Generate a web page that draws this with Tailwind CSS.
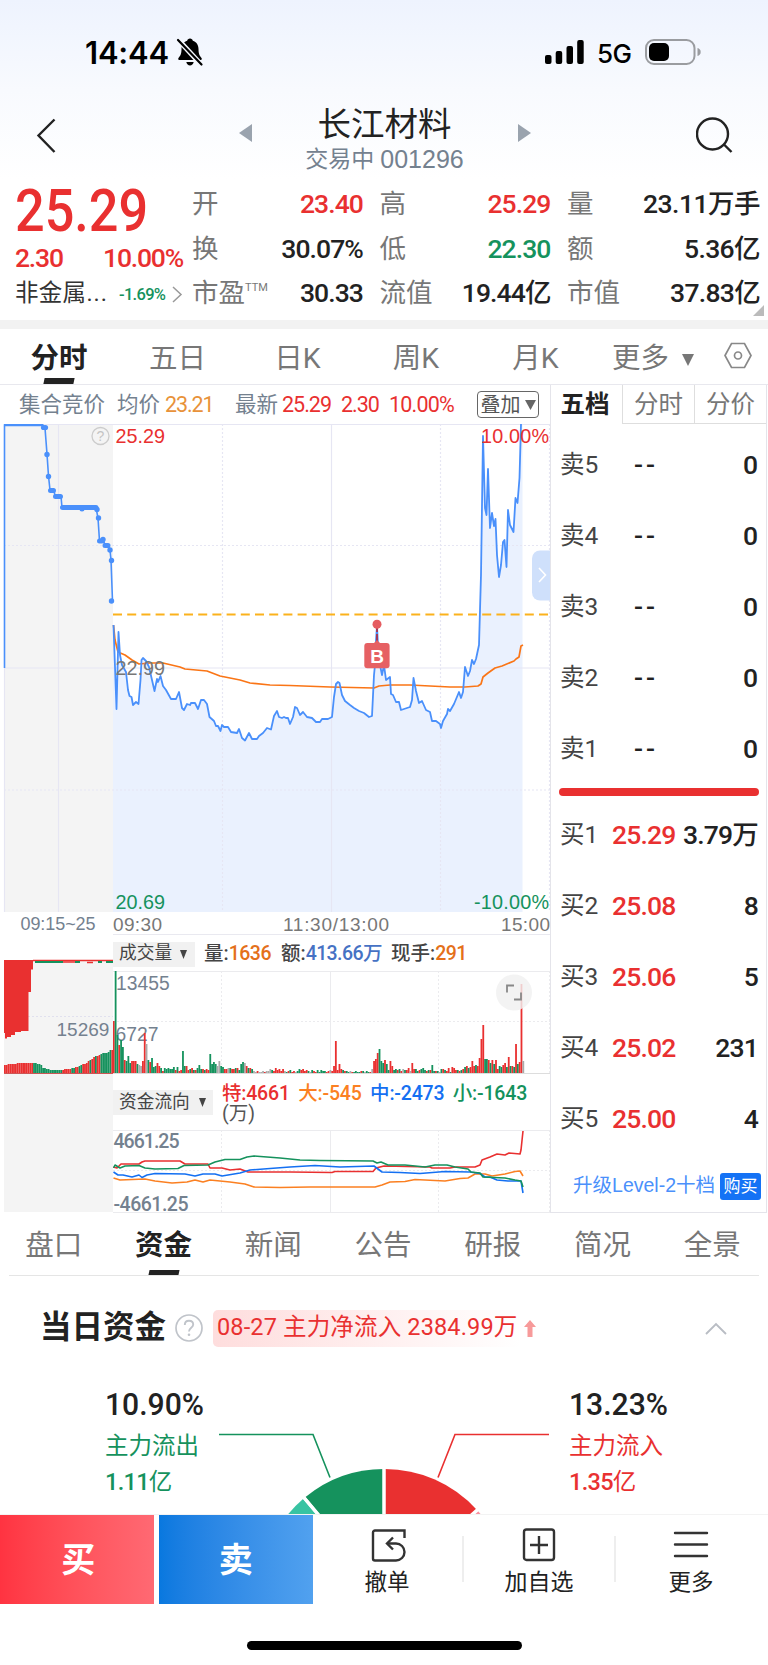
<!DOCTYPE html>
<html lang="zh-CN">

<head>
    <meta charset="UTF-8">
    <meta name="viewport" content="width=device-width, initial-scale=1.0">
    <title>长江材料 001296</title>
    <script src="https://cdn.jsdelivr.net/npm/@tailwindcss/browser@4"></script>
</head>

<body class="bg-white font-['Roboto','Noto_Sans_CJK_SC',sans-serif] text-[#222]">
    <div class="w-[768px] h-[1665px] overflow-hidden flex flex-col leading-none whitespace-nowrap">

        <!-- Statusrad + titel -->
        <header class="h-[180px] shrink-0 bg-linear-to-b from-[#eef3fe] via-[#f8fafe] to-white">
            <div class="h-[104px] pt-[37px] pl-[85px] pr-[66px] flex justify-between text-black">
                <div class="h-[30px] flex items-center gap-[7px]">
                    <span class="font-['Inter'] font-semibold text-[31px] tracking-[-0.2px] pt-px">14:44</span>
                    <svg class="w-[28px] h-[30px]" viewBox="0 0 28 30">
                        <path d="M14 1.5c1.5 0 2.6 1 2.8 2.2 3.700 1.200 5.700 4.300 5.700 8.300 0 5.500 1.500 7.200 3 9 .7.900.3 2-.8 2H3.300c-1.100 0-1.500-1.100-.8-2 1.500-1.800 3-3.500 3-9 0-4 2-7.100 5.700-8.300C11.400 2.500 12.500 1.500 14 1.500zM10.300 25h7.400c-.5 2.200-1.900 3.400-3.700 3.400s-3.200-1.200-3.700-3.400z" />
                        <path d="M2 2.500 25.500 28" stroke="#f5f8fe" stroke-width="5" />
                        <path d="M2 3 25.500 27.500" stroke="#000" stroke-width="2.200" stroke-linecap="round" />
                    </svg>
                </div>
                <div class="h-[30px] flex items-center">
                    <svg class="w-[39px] h-[26px]" viewBox="0 0 39 26">
                        <rect x="0" y="16" width="6.500" height="9" rx="2" />
                        <rect x="10.700" y="12" width="6.500" height="13" rx="2" />
                        <rect x="21.500" y="7" width="6.500" height="18" rx="2" />
                        <rect x="32.200" y="1" width="6.500" height="24" rx="2" />
                    </svg>
                    <span class="ml-[13px] w-[48px] font-['Inter'] font-medium text-[26px] tracking-[-0.5px] pt-[4px]">5G</span>
                    <svg class="w-[57px] h-[28px]" viewBox="0 0 57 28">
                        <rect x="1" y="2" width="48.500" height="24" rx="8" fill="none" stroke="#9a9ca0" stroke-width="2" />
                        <rect x="4" y="5" width="20" height="18" rx="5" />
                        <path d="M52.500 10v8c2-.6 3.200-2 3.200-4s-1.200-3.400-3.200-4z" fill="#9a9ca0" />
                    </svg>
                </div>
            </div>
            <div class="pl-[36px] pr-[34px] flex justify-between items-start">
                <svg class="w-[22px] h-[38px] mt-[13px]" viewBox="0 0 22 38">
                    <path d="M18.500 2.500 2.500 18.500 18.500 35" fill="none" stroke="#222" stroke-width="2.400" />
                </svg>
                <div class="ml-[15px] w-[292px] flex justify-between">
                    <svg class="w-[14px] h-[18px] mt-[20px]" viewBox="0 0 14 18"><path d="M13 0v18L0 9z" fill="#9aa3ae" /></svg>
                    <div class="flex flex-col items-center">
                        <span class="text-[33.500px] h-[42px] flex items-center">长江材料</span>
                        <span class="text-[23px] h-[26px] flex items-center gap-[6px] text-[#74818f]">交易中<span class="font-['Liberation_Sans'] text-[25px]">001296</span></span>
                    </div>
                    <svg class="w-[14px] h-[18px] mt-[20px]" viewBox="0 0 14 18"><path d="M1 0v18l13-9z" fill="#9aa3ae" /></svg>
                </div>
                <svg class="w-[38px] h-[38px] mt-[13px]" viewBox="0 0 38 38" fill="none" stroke="#222" stroke-width="2.400">
                    <circle cx="16.500" cy="17" r="15.500" />
                    <path d="m28 27.500 7.500 7.500" />
                </svg>
            </div>
        </header>

        <!-- Kursdata -->
        <section class="h-[140px] shrink-0 flex relative">
            <div class="w-[192px] pl-[15px] text-[#e93030]">
                <div class="h-[58px] pt-[4px] flex items-center text-[59px] leading-[54px] font-medium"><span class="origin-left scale-x-[0.885]">25.29</span></div>
                <div class="h-[36px] w-[168px] flex items-center justify-between text-[26.500px] leading-[27px] font-medium tracking-[-1.200px] pt-[3px]">
                    <span>2.30</span><span>10.00%</span>
                </div>
                <div class="h-[40px] flex items-center text-[23.500px] text-[#333]">
                    <span class="w-[104px] tracking-[0.300px]">非金属<span class="tracking-[1px]">...</span></span>
                    <span class="w-[52px] pt-[2px] text-[16.500px] font-medium tracking-[-0.700px] text-[#15925d]">-1.69%</span>
                    <svg class="w-[12px] h-[17px]" viewBox="0 0 12 17"><path d="m2 1 8 7.500-8 7.500" fill="none" stroke="#999" stroke-width="1.500" /></svg>
                </div>
            </div>
            <div class="w-[568px] h-[136px] pt-[2px] grid grid-cols-[171px_171px_193px] gap-x-[16.500px] grid-rows-3 text-[26.500px] font-medium tracking-[-0.900px] [&>div]:flex [&>div]:items-center [&>div]:justify-between [&_b]:font-normal [&_b]:text-[#777] [&_b]:tracking-normal">
                <div><b>开</b><span class="text-[#e93030]">23.40</span></div>
                <div><b>高</b><span class="text-[#e93030]">25.29</span></div>
                <div><b>量</b><span class="tracking-[-0.500px]">23.11万手</span></div>
                <div><b>换</b><span>30.07%</span></div>
                <div><b>低</b><span class="text-[#15925d]">22.30</span></div>
                <div><b>额</b><span class="tracking-[-0.600px]">5.36亿</span></div>
                <div><b class="flex items-start">市盈<span class="text-[11px] pt-[2px]">TTM</span></b><span>30.33</span></div>
                <div><b>流值</b><span>19.44亿</span></div>
                <div><b>市值</b><span class="tracking-[-0.700px]">37.83亿</span></div>
            </div>
            <svg class="absolute right-[4px] bottom-[4px] w-[11px] h-[11px]" viewBox="0 0 11 11"><path d="M11 0v11H0z" fill="#bbb" /></svg>
        </section>

        <div class="h-[9px] shrink-0 bg-[#f2f2f2]"></div>

        <!-- Periodflikar -->
        <nav class="h-[56px] shrink-0 border-b border-[#e8e8ee] flex items-stretch text-[28.500px] text-[#777]">
            <div class="w-[118px] flex flex-col items-center justify-between font-bold text-[#222]">
                <span class="pt-[15.500px]">分时</span>
                <span class="w-[30px] h-[6px] bg-[#222] -skew-x-12"></span>
            </div>
            <span class="w-[119px] pt-[15.500px] text-center">五日</span>
            <span class="w-[121px] pt-[15.500px] text-center">日K</span>
            <span class="w-[116px] pt-[15.500px] text-center">周K</span>
            <span class="w-[123px] pt-[15.500px] text-center">月K</span>
            <span class="w-[70px] pl-[15px] pt-[15.500px]">更多</span>
            <svg class="ml-[15px] mt-[25px] w-[12px] h-[13px]" viewBox="0 0 12 13"><path d="M0 0h12L6 12z" fill="#777" /></svg>
            <svg class="ml-[30px] mt-[13px] w-[28px] h-[27px]" viewBox="0 0 28 27" fill="none" stroke="#888" stroke-width="1.700">
                <path d="M7.500 1.500h13l6.500 12-6.500 12h-13L1 13.500z" />
                <circle cx="14" cy="13.500" r="3.500" />
            </svg>
        </nav>

        <main class="h-[828px] shrink-0 flex">
            <div class="w-[550px] flex flex-col">
                <div class="h-[39px] flex items-center pl-[19px] text-[21.500px] text-[#74818f]">
                    <span class="w-[98px]">集合竞价</span>
                    <span class="w-[48px]">均价</span>
                    <span class="w-[70px] tracking-[-1.100px] text-[#e8923a]">23.21</span>
                    <span class="w-[47px]">最新</span>
                    <span class="w-[59px] tracking-[-1px] text-[#e93030]">25.29</span>
                    <span class="w-[48px] tracking-[-1px] text-[#e93030]">2.30</span>
                    <span class="w-[88px] tracking-[-0.800px] text-[#e93030]">10.00%</span>
                    <span class="w-[62px] h-[27px] border-[1.500px] border-[#666] rounded-[4px] flex items-center justify-center gap-[4px] text-[20px] text-[#555]">叠加<svg class="w-[11px] h-[10px]" viewBox="0 0 11 10"><path d="M0 0h11L5.500 10z" fill="#666" /></svg></span>
                </div>

                <!-- Prisdiagram -->
                <svg class="w-[550px] h-[510px] shrink-0" viewBox="0 424 550 510" font-family="Liberation Sans">
                    <rect x="4" y="424" width="109" height="488" fill="#f4f4f4" />
                    <path d="M113 625 L113.500 625 L116.500 709 L118.500 632 L120 655 L122 665 L126 672 L128 690 L129.500 696 L131.500 697 L133 705 L136 702 L138.500 704 L140.500 680 L141.500 660 L143 658 L146 661 L149 667 L152 680 L154.500 691 L157 679 L158 682 L160.500 676 L163 686 L166 690 L171 699 L176 699 L179 692 L182 708 L184 710 L187 704 L190 705 L191 703 L195 703 L198 709 L201 700 L204 700 L207 704 L209.500 717 L214 721 L216 726 L218 726 L220.500 731 L222 725 L224 727 L228 727 L231 732 L237 733 L239 729 L242 738 L245 740.500 L249 733 L252 739 L257 739 L259 736 L263 733 L267 728 L271 729.500 L274 716 L277 711 L279 717 L282 718 L284 717 L286 718 L288 718 L290 724 L293 717 L295 707 L297 708 L300 715 L303 712 L307 717 L312 718 L316 722 L320 722 L322 719 L328 719 L332 717 L334 697 L336 684 L338 682 L339.500 683 L342 695 L345 701 L350 705 L354 708 L359 711 L364 713 L369 717 L372 716 L374 675 L375 665 L376 640 L377 626 L378 645 L380 665 L382 675 L384 665 L386 680 L390 677 L391 694 L393 695 L396 702 L399 702 L401 710 L410 707 L412 700 L413.500 678 L416 691 L419 703 L422 701 L426 710 L430 712 L432 721 L436 721 L440 724 L441 728 L443 721 L447 714 L448 709 L450 711 L454 704 L459 692 L461 698 L463 692 L465 667 L468 676 L470 671 L472 660 L474 664 L476 659 L479 645 L481 575 L483 436 L485 508 L486.500 515 L488 469 L490 528 L492 513 L494 526 L495.500 519 L497 555 L499 577 L501 565 L503 542 L504.500 540 L506.500 567 L508 510 L510 525 L513.500 532 L515.500 498 L517.500 503 L519.500 478 L521 424 L522.500 424 L522.500 912 L113 912Z" fill="#eaf1fe" />
                    <g stroke="#e6e6f3" stroke-width="1.200" fill="none">
                        <path d="M4 424.500H550M4 668H550M4.500 668V912M58.500 424V912M331.500 424V912" />
                        <path d="M4 545.500H550M4 790H550M222.500 424V912M440.500 424V912M549.500 424V912" stroke-dasharray="2 2" />
                    </g>
                    <path d="M113 614.500H550" stroke="#fbb21c" stroke-width="1.800" stroke-dasharray="9 5.200" />
                    <path d="M113.500 625 L115 640 L118 652 L125 655 L132 660 L139 664 L150 663 L163 663 L180 667 L185 669 L207 671 L220 676 L240 680 L250 683 L270 685 L290 685.500 L330 687 L374 688 L379 686 L390 685 L410 685 L450 687 L465 687 L478 686 L481 684 L483 677 L488 673 L495 668 L502 666 L514 661 L516 659 L519 657 L521 646 L523 645" fill="none" stroke="#fa7516" stroke-width="1.700" stroke-linejoin="round" />
                    <path d="M113.500 625 L116.500 709 L118.500 632 L120 655 L122 665 L126 672 L128 690 L129.500 696 L131.500 697 L133 705 L136 702 L138.500 704 L140.500 680 L141.500 660 L143 658 L146 661 L149 667 L152 680 L154.500 691 L157 679 L158 682 L160.500 676 L163 686 L166 690 L171 699 L176 699 L179 692 L182 708 L184 710 L187 704 L190 705 L191 703 L195 703 L198 709 L201 700 L204 700 L207 704 L209.500 717 L214 721 L216 726 L218 726 L220.500 731 L222 725 L224 727 L228 727 L231 732 L237 733 L239 729 L242 738 L245 740.500 L249 733 L252 739 L257 739 L259 736 L263 733 L267 728 L271 729.500 L274 716 L277 711 L279 717 L282 718 L284 717 L286 718 L288 718 L290 724 L293 717 L295 707 L297 708 L300 715 L303 712 L307 717 L312 718 L316 722 L320 722 L322 719 L328 719 L332 717 L334 697 L336 684 L338 682 L339.500 683 L342 695 L345 701 L350 705 L354 708 L359 711 L364 713 L369 717 L372 716 L374 675 L375 665 L376 640 L377 626 L378 645 L380 665 L382 675 L384 665 L386 680 L390 677 L391 694 L393 695 L396 702 L399 702 L401 710 L410 707 L412 700 L413.500 678 L416 691 L419 703 L422 701 L426 710 L430 712 L432 721 L436 721 L440 724 L441 728 L443 721 L447 714 L448 709 L450 711 L454 704 L459 692 L461 698 L463 692 L465 667 L468 676 L470 671 L472 660 L474 664 L476 659 L479 645 L481 575 L483 436 L485 508 L486.500 515 L488 469 L490 528 L492 513 L494 526 L495.500 519 L497 555 L499 577 L501 565 L503 542 L504.500 540 L506.500 567 L508 510 L510 525 L513.500 532 L515.500 498 L517.500 503 L519.500 478 L521 424" fill="none" stroke="#4a90fb" stroke-width="1.800" stroke-linejoin="round" />
                    <!-- Öppningsauktion -->
                    <g fill="none" stroke="#4a90fb">
                        <path d="M4.500 668V425H43L45 428 47 454 48.500 476 50 490H54L55 496.500H61L62 507.500H96L98 518 99.500 541 103 539 105 545H108L110 550 111 560 112.500 601" stroke-width="1.600" />
                        <path d="M4 425H43" stroke-width="2.600" />
                        <path d="M50.500 490.500H53.500M55.500 496.500H60.500M62.500 507.500H96M82 508V509M99.500 541H102M105 545.500H108" stroke-width="5" stroke-linecap="round" />
                    </g>
                    <g fill="#4a90fb">
                        <circle cx="43.500" cy="427.500" r="2.600" /><circle cx="45.500" cy="427.500" r="2.600" /><circle cx="47" cy="454.500" r="2.700" /><circle cx="48.500" cy="476.500" r="2.700" />
                        <circle cx="97" cy="509.500" r="2.700" /><circle cx="98.500" cy="518" r="2.700" /><circle cx="103" cy="539.500" r="2.700" /><circle cx="110" cy="550" r="2.700" />
                        <circle cx="111.500" cy="560.500" r="2.700" /><circle cx="111.500" cy="601" r="2.700" />
                    </g>
                    <circle cx="100.500" cy="436" r="8.500" fill="none" stroke="#ccc" stroke-width="1.300" />
                    <text x="100.500" y="441" font-size="14" fill="#c4c4c4" text-anchor="middle">?</text>
                    <g font-size="19.800">
                        <text x="115.500" y="442.500" fill="#e93030">25.29</text>
                        <text x="549" y="442.500" fill="#e93030" text-anchor="end" textLength="68">10.00%</text>
                        <text x="115.500" y="675" fill="#777">22.99</text>
                        <text x="115.500" y="908.500" fill="#15925d">20.69</text>
                        <text x="549" y="908.500" fill="#15925d" text-anchor="end" textLength="75">-10.00%</text>
                        <text x="113" y="931" font-size="19" textLength="49" fill="#777">09:30</text>
                        <text x="336" y="931" font-size="19" textLength="106" fill="#777" text-anchor="middle">11:30/13:00</text>
                        <text x="550" y="931" font-size="19" textLength="49" fill="#777" text-anchor="end">15:00</text>
                        <text x="20.500" y="930" font-size="18" textLength="75" fill="#74818f">09:15~25</text>
                    </g>
                    <!-- Köpmarkering -->
                    <path d="M377 624V643" stroke="#a03a5c" stroke-width="2" stroke-dasharray="8 2" />
                    <circle cx="377" cy="624.300" r="4.500" fill="#e55c60" />
                    <path d="M373 644l4-4 4 4z" fill="#e66063" />
                    <rect x="364.300" y="643" width="25.300" height="25.300" rx="3" fill="#e66063" />
                    <text x="377" y="662.500" font-size="19" font-weight="bold" fill="#fff" text-anchor="middle">B</text>
                    <path d="M550 550.500h-10a8 8 0 0 0-8 8v34a8 8 0 0 0 8 8h10z" fill="#cfe0fb" />
                    <path d="m539 568 6.500 7-6.500 7" fill="none" stroke="#fff" stroke-width="1.600" />
                </svg>

                <div class="flex h-[279px]">
                    <svg class="w-[113px] h-[279px]" viewBox="0 934 113 279" font-family="Liberation Sans">
                        <rect x="4" y="960" width="109" height="252" fill="#f4f4f4" />
                        <path d="M4 1016.500H113" stroke="#e0e0ee" stroke-dasharray="2 2" />
                        <path d="M4 960H33V969.500H31V992H28.500V1031H21V1032H15V1035H11V1037H7V1038.500H5V1033H4Z" fill="#e93030" />
                        <path d="M33 960.500H113" stroke="#e93030" stroke-width="1.500" />
                        <path d="M35 962H63M75 962H80M98 962H102M106 962H113" stroke="#15925d" stroke-width="1.800" />
                        <path d="M63 962H75M87 962.500H93" stroke="#e93030" stroke-width="1.600" />
                        <g id="auctionBars"></g>
                        <path d="M4 1073.500H113" stroke="#c55" stroke-width="1" />
                        <text x="56.500" y="1036" font-size="19" fill="#74818f">15269</text>
                    </svg>
                    <div class="w-[437px] flex flex-col">
                        <div class="h-[37px] pt-[2px] border-t-[1.500px] border-[#e9e9f0] flex items-center text-[19.500px] font-medium text-[#444]">
                            <span class="w-[82px] h-[25px] bg-[#f1f1f1] pl-[6px] flex items-center gap-[8px] text-[17.700px] font-normal">成交量<svg class="w-[7px] h-[9px]" viewBox="0 0 7 9"><path d="M0 0h7L3.500 9z" fill="#444" /></svg></span>
                            <span class="ml-[9px] w-[77px]">量:<span class="text-[#e4701a] tracking-[-0.500px]">1636</span></span>
                            <span class="w-[110px]">额:<span class="text-[#4672c4] tracking-[-0.600px]">413.66万</span></span>
                            <span>现手:<span class="text-[#e4701a] tracking-[-0.500px]">291</span></span>
                        </div>
                        <svg class="w-[437px] h-[103px] shrink-0" viewBox="113 971 437 103" font-family="Liberation Sans">
                            <g stroke="#ebebee" fill="none">
                                <path d="M113 971.500H550M330.500 971V1073" />
                                <path d="M113 1021.500H550M221.500 971V1073M438.500 971V1073M549.500 971V1073" stroke-dasharray="2 2" />
                            </g>
                            <g font-size="19.300" fill="#74818f">
                                <text x="116" y="990">13455</text>
                                <text x="115.500" y="1041">6727</text>
                            </g>
                            <g id="volumeBars"></g>
                            <path d="M113 1073.500H550" stroke="#ddd" />
                            <circle cx="514" cy="992.500" r="18" fill="#f0f0f0" fill-opacity=".82" />
                            <path d="M507 992.500V985.500H514M514 999.500H521V992.500" fill="none" stroke="#888" stroke-width="1.800" />
                        </svg>
                        <div class="h-[56px] flex text-[19.500px] font-medium">
                            <span class="mt-[16px] w-[100px] h-[25px] bg-[#f1f1f1] pl-[6px] flex items-center gap-[9px] text-[17.700px] font-normal text-[#444]">资金流向<svg class="w-[7px] h-[9px]" viewBox="0 0 7 9"><path d="M0 0h7L3.500 9z" fill="#444" /></svg></span>
                            <div class="ml-[9px] pt-[10px] leading-[20px]">
                                <div class="flex gap-[8.500px] tracking-[-0.200px]">
                                    <span class="text-[#e93030]">特:4661</span>
                                    <span class="text-[#fb8022]">大:-545</span>
                                    <span class="text-[#1470f2]">中:-2473</span>
                                    <span class="text-[#15925d]">小:-1643</span>
                                </div>
                                <div class="font-normal text-[#555]">(万)</div>
                            </div>
                        </div>
                        <svg class="w-[437px] h-[83px] shrink-0" viewBox="113 1130 437 83">
                            <g stroke="#ebebee" fill="none">
                                <path d="M113 1130.500H550M113 1212.500H550M330.500 1130V1212" />
                                <path d="M113 1170.500H550M221.500 1130V1212M438.500 1130V1212M549.500 1130V1212" stroke-dasharray="2 2" />
                            </g>
                            <g font-family="Roboto" font-size="19.500" font-weight="500" fill="#74818f">
                                <text x="113.500" y="1147.500" textLength="66">4661.25</text>
                                <text x="113.500" y="1210.500" textLength="75">-4661.25</text>
                            </g>
                            <g fill="none" stroke-width="1.600" stroke-linejoin="round">
                                <path stroke="#fb8022" d="M113.500 1178 120 1180 145 1179 155 1181 172 1183 187 1182 195 1180 203 1182 210 1180 230 1182 245 1184 254 1187 280 1187.500 310 1187 375 1187 382 1185 390 1182 405 1181.500 415 1179.500 445 1181 460 1178.500 468 1178 475 1174 485 1174 492 1176 505 1174 515 1171.500 520 1171 523 1176" />
                                <path stroke="#e93030" d="M113.500 1167 117 1168 119 1166 121 1164 139 1164 142 1162 145 1161 180 1161 185 1164 208 1164 210 1168 222 1168 230 1170 240 1169 248 1172 290 1172 332 1172.500 335 1171.500 373 1171.500 376 1168 384 1166 430 1167 432 1168 450 1168 455 1167 475 1167 480 1165 482 1160 490 1157 497 1154 505 1155 509 1153 520 1154 521 1150 523 1131" />
                                <path stroke="#1470f2" d="M113.500 1172 118 1175 123 1175 132 1177 139 1175 142 1177.500 147 1175 155 1173.500 185 1174 195 1176 203 1174 215 1174 222 1176 240 1173 250 1170 270 1168.500 290 1167 315 1165.500 340 1167 374 1166 378 1169 382 1172 400 1172.500 420 1173.500 445 1171.500 470 1172 480 1173.500 485 1177 490 1177 497 1180 508 1181 521 1181 523 1193" />
                                <path stroke="#15925d" d="M113.500 1168 115 1165 120 1168 125 1166 139 1165.500 145 1168 155 1169 178 1168.500 184 1165.500 208 1165 215 1162 225 1159.500 240 1159.500 247 1157 254 1156 280 1158 300 1160 320 1160.500 373 1161 377 1163 381 1162 388 1165 405 1165 425 1167 435 1165 447 1165 455 1167 468 1169 471 1172 480 1173 483 1177 505 1178 515 1180 521 1181 523 1187" />
                            </g>
                        </svg>
                    </div>
                </div>
            </div>

            <!-- Orderbok -->
            <aside class="w-[217px] border-x border-b border-[#e4e4ea] flex flex-col text-[26.500px] font-medium">
                <div class="h-[39px] shrink-0 flex text-[24.500px] text-center leading-[40px]">
                    <span class="w-[71px] pr-[3px] font-bold">五档</span>
                    <span class="w-[72px] border-l-[1.500px] border-b-[1.500px] border-[#dedede] font-normal text-[#777]">分时</span>
                    <span class="w-[72px] border-l-[1.500px] border-b-[1.500px] border-[#dedede] font-normal text-[#777]">分价</span>
                </div>
                <div class="h-[364px] shrink-0 pt-[6px] [&>div]:h-[71px] [&>div]:flex [&>div]:items-center [&>div]:pl-[9px] [&>div]:pr-[8px] [&_b]:w-[74px] [&_b]:font-normal [&_b]:text-[24.500px] [&_b]:text-[#444]">
                    <div><b>卖5</b><span class="tracking-[3px]">--</span><span class="ml-auto">0</span></div>
                    <div><b>卖4</b><span class="tracking-[3px]">--</span><span class="ml-auto">0</span></div>
                    <div><b>卖3</b><span class="tracking-[3px]">--</span><span class="ml-auto">0</span></div>
                    <div><b>卖2</b><span class="tracking-[3px]">--</span><span class="ml-auto">0</span></div>
                    <div><b>卖1</b><span class="tracking-[3px]">--</span><span class="ml-auto">0</span></div>
                </div>
                <div class="h-[8px] shrink-0 ml-[8px] mr-[7px] rounded-full bg-[#e93030]"></div>
                <div class="h-[359px] shrink-0 pt-[4px] tracking-[-0.800px] [&>div]:h-[71px] [&>div]:flex [&>div]:items-center [&>div]:pl-[9px] [&>div]:pr-[8px] [&_b]:w-[52px] [&_b]:font-normal [&_b]:text-[24.500px] [&_b]:text-[#444] [&_b]:tracking-normal [&_i]:not-italic [&_i]:text-[#e93030]">
                    <div><b>买1</b><i>25.29</i><span class="ml-auto">3.79万</span></div>
                    <div><b>买2</b><i>25.08</i><span class="ml-auto">8</span></div>
                    <div><b>买3</b><i>25.06</i><span class="ml-auto">5</span></div>
                    <div><b>买4</b><i>25.02</i><span class="ml-auto">231</span></div>
                    <div><b>买5</b><i>25.00</i><span class="ml-auto">4</span></div>
                </div>
                <div class="h-[32px] shrink-0 mt-[15px] flex items-center justify-end gap-[5px] pr-[5px] text-[19.500px] font-normal text-[#4a90fb]">
                    <span class="font-['Liberation_Sans','Noto_Sans_CJK_SC',sans-serif]">升级Level-2十档</span>
                    <span class="w-[41px] h-[27px] rounded-[3px] bg-[#1472f5] text-white text-[17px] flex items-center justify-center">购买</span>
                </div>
            </aside>
        </main>

        <!-- Sektionsflikar -->
        <nav class="h-[63px] shrink-0 mx-[9px] border-b border-[#e5e5e5] flex text-[28.500px] text-[#777]">
            <div class="-ml-[10px] w-[768px] shrink-0 grid grid-cols-7 text-center pt-[18.500px]">
                <span>盘口</span>
                <div class="flex flex-col items-center justify-between font-bold text-[#222]">
                    <span>资金</span>
                    <span class="w-[30px] h-[5px] bg-[#222] -skew-x-12"></span>
                </div>
                <span>新闻</span>
                <span>公告</span>
                <span>研报</span>
                <span>简况</span>
                <span>全景</span>
            </div>
        </nav>

        <section class="h-[238px] shrink-0 relative">
            <div class="h-[104px] pl-[40px] pr-[41px] flex items-center">
                <h2 class="w-[135px] text-[31.500px] font-bold">当日资金</h2>
                <svg class="w-[28px] h-[28px]" viewBox="0 0 28 28">
                    <circle cx="14" cy="14" r="13" fill="none" stroke="#c0c4ca" stroke-width="1.700" />
                    <path d="M9.800 11c0-2.600 1.800-4.200 4.200-4.200s4.200 1.500 4.200 3.800c0 3.200-4.200 3.200-4.200 6.900" fill="none" stroke="#c0c4ca" stroke-width="1.900" />
                    <circle cx="14" cy="20.800" r="1.300" fill="#c0c4ca" />
                </svg>
                <span class="ml-[10px] w-[308px] h-[37px] rounded-[5px] bg-linear-to-r from-[#fedddd] to-white pl-[4px] flex items-center text-[23.500px] text-[#e93030] tracking-[0.150px]">08-27 主力净流入 2384.99万</span>
                <svg class="ml-[3px] w-[12px] h-[17px]" viewBox="0 0 12 17"><path d="M6 0l6 7H8.500v10h-5V7H0z" fill="#f79a9a" /></svg>
                <svg class="ml-auto w-[22px] h-[13px]" viewBox="0 0 22 13"><path d="m1 12 10-10 10 10" fill="none" stroke="#b9bdc4" stroke-width="1.900" /></svg>
            </div>
            <div class="flex justify-between pl-[105px] pr-[99px] -mt-px">
                <div class="w-[100px] text-[23.500px] text-[#15925d]">
                    <div class="h-[50px] flex items-center text-[32px] font-medium text-[#222]"><span class="origin-left scale-x-[0.94]">10.90%</span></div>
                    <div class="h-[36px] flex items-center">主力流出</div>
                    <div class="h-[36px] flex items-center tracking-[-0.700px] font-medium">1.11<span class="font-normal">亿</span></div>
                </div>
                <div class="w-[100px] text-[23.500px] text-[#e93030]">
                    <div class="h-[50px] flex items-center text-[32px] font-medium text-[#222]"><span class="origin-left scale-x-[0.94]">13.23%</span></div>
                    <div class="h-[36px] flex items-center">主力流入</div>
                    <div class="h-[36px] flex items-center tracking-[-0.700px] font-medium">1.35<span class="font-normal">亿</span></div>
                </div>
            </div>
            <!-- Cirkeldiagram, klipps av bottenraden -->
            <svg class="absolute left-[210px] top-[149px] w-[350px] h-[89px]" viewBox="210 1425 350 89">
                <path d="M384 1593V1469A124 124 0 0 0 305.500 1497Z" fill="#15925d" />
                <path d="M384 1593V1469A124 124 0 0 1 477 1510Z" fill="#e93030" />
                <path d="M384 1593 303 1499A124 124 0 0 0 270 1544Z" fill="#38c3a2" />
                <path d="M384 1593 478 1511A124 124 0 0 1 500 1548Z" fill="#f890a0" />
                <path d="M384 1593V1465M384 1593 301 1494M384 1593 484 1504" stroke="#fff" stroke-width="3.500" />
                <path d="M219 1434.500H313L330 1477.500" fill="none" stroke="#15925d" stroke-width="1.600" />
                <path d="M549 1434.500H455L438 1477.500" fill="none" stroke="#e93030" stroke-width="1.600" />
            </svg>
        </section>

        <!-- Bottenrad -->
        <footer class="h-[151px] shrink-0 bg-white border-t border-[#f3f3f3] flex flex-col items-center justify-between">
            <div class="w-full h-[89px] flex text-[22.500px]">
                <button class="w-[153.500px] bg-linear-to-r from-[#ff3341] to-[#ff6973] text-white text-[34px] font-bold pl-[3px]">买</button>
                <button class="ml-[5.500px] w-[153.500px] bg-linear-to-r from-[#0878df] to-[#51a1ef] text-white text-[34px] font-bold">卖</button>
                <div class="w-[149px] flex flex-col items-center pt-[13px] gap-[8px]">
                    <svg class="ml-[3px] w-[36px] h-[35px]" viewBox="0 0 36 35" fill="none" stroke="#333" stroke-width="2.400">
                        <path d="M33.500 10V2.500H4a2 2 0 0 0-2 2V30.500a2 2 0 0 0 2 2H25a8.500 8.500 0 0 0 0-17H17" />
                        <path d="M22 9.500 16 15.500 22 21.500" />
                    </svg>
                    <span>撤单</span>
                </div>
                <span class="mt-[21px] w-[2px] h-[46px] bg-[#eee]"></span>
                <div class="w-[151px] flex flex-col items-center pt-[13px] gap-[8px]">
                    <svg class="w-[34px] h-[35px]" viewBox="0 0 34 35" fill="none" stroke="#333" stroke-width="2.400">
                        <rect x="2" y="1.500" width="30" height="30.500" rx="2.500" />
                        <path d="M17 8V26M8 17H26" />
                    </svg>
                    <span class="text-[23px]">加自选</span>
                </div>
                <span class="-ml-px mt-[21px] w-[2px] h-[46px] bg-[#eee]"></span>
                <div class="w-[151px] flex flex-col items-center pt-[13px] gap-[8px]">
                    <svg class="w-[36px] h-[35px]" viewBox="0 0 36 35" fill="none" stroke="#333" stroke-width="2.400" stroke-linecap="round">
                        <path d="M2 5H34M2 16.500H34M2 28H34" />
                    </svg>
                    <span>更多</span>
                </div>
            </div>
            <div class="w-[275px] h-[9px] mb-[15px] rounded-full bg-black"></div>
        </footer>
    </div>

    <script>
        const colors = { r: '#e93030', g: '#15925d', n: '#aaaaaa' };

        // Ritar staplar från en sträng, t.ex. "r52 g102": färg + höjd
        function drawBars(id, data, startX, step, baseY) {
            document.getElementById(id).innerHTML = data.trim().split(/\s+/).map((item, i) => {
                const h = Number(item.slice(1));
                return `<rect x="${(startX + i * step).toFixed(2)}" y="${baseY - h}" width="1.8" height="${h}" fill="${colors[item[0]]}"/>`;
            }).join('');
        }

        drawBars('volumeBars', `
            r52 g102 g38 r28 g33 g26 r13 g12 g17 g10 r12 r12 r12 g9 n8 n7 r12 r40 n29 g13 r11 g15 g6 g7 r10 r7 g5 r2 g5 g4
            g5 g4 g4 g6 r3 g6 r2 r3 g22 g7 r7 r3 g4 r5 g3 r3 g5 g8 g4 r4 g3 r4 r3 g19 g9 g11 g9 n7 n12 g7
            g6 r4 r4 n5 g5 r4 r4 g5 r5 g3 g9 g11 n10 r7 g5 r5 g4 n2 n1 r2 n1 n1 n2 r1 n2 n2 n4 g3 r2 r5
            r3 r4 r2 r4 n2 g1 r2 g3 r1 r2 n1 g2 g4 r3 r4 r2 r3 g2 n1 g3 r2 r1 g3 g1 g3 g2 g2 r1 r2 n3
            r2 r7 r32 r3 r9 r4 g3 r2 g2 g1 n2 r1 g1 g2 g1 g1 r2 g2 n1 g2 g1 r1 n4 r12 r14 r20 g24 g12 g10 r13
            g9 g3 r12 r7 g3 g4 r3 g4 r2 n4 g3 r3 r5 n2 r10 r4 g4 g2 r3 g4 g5 g3 r2 g3 r3 g8 g2 r2 g2 n1
            g4 r4 g3 r2 r5 g1 r6 r5 r3 g3 r2 g3 r4 g6 r7 g5 r6 r12 r7 g8 r7 r15 r34 r48 g14 g14 r13 g10 r13 g9
            r13 r4 g7 g6 r8 r10 g6 r16 g7 r7 g6 r29 g9 r11 r89 n12`, 112.9, 1.82, 1073);

        drawBars('auctionBars', `
            r8 r8 r9 r9 r9 r9 r9 r10 r10 r10 r10 r10 r10 r10 r10 r10 g10 g10 g9 g9 g8 g5 g5 g4 g4 g3 g3 g3 g3 g3
            g3 g3 r3 r4 r4 r4 r4 g5 g5 r6 r6 g7 g8 r9 r9 r10 r12 g13 r14 r16 g17 r17 r18 g19 g20 g20 g20 g21 g23 r23`, 4, 1.82, 1073);
    </script>
</body>

</html>
